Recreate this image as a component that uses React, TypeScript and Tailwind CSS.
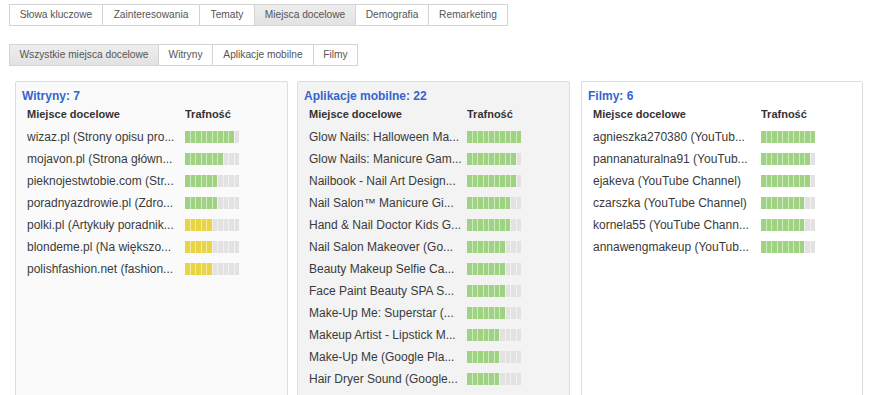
import React from 'react';

type Row = { name: string; score: number; color?: 'green' | 'yellow' };

type Panel = {
  title: string;
  bg: string;
  width: string;
  textCol: string;
  rows: Row[];
};

const topTabs = [
  { label: 'Słowa kluczowe', w: 'w-[94px]' },
  { label: 'Zainteresowania', w: 'w-[97px]' },
  { label: 'Tematy', w: 'w-[55px]' },
  { label: 'Miejsca docelowe', w: 'w-[101px]', active: true },
  { label: 'Demografia', w: 'w-[73px]' },
  { label: 'Remarketing', w: 'w-[79px]' },
];

const subTabs = [
  { label: 'Wszystkie miejsca docelowe', w: 'w-[150px]', active: true },
  { label: 'Witryny', w: 'w-[54px]' },
  { label: 'Aplikacje mobilne', w: 'w-[101px]' },
  { label: 'Filmy', w: 'w-[44px]' },
];

const panels: Panel[] = [
  {
    title: 'Witryny: 7',
    bg: 'bg-[#fafafa]',
    width: 'w-[273px]',
    textCol: 'w-[158px]',
    rows: [
      { name: 'wizaz.pl (Strony opisu pro...', score: 9 },
      { name: 'mojavon.pl (Strona główn...', score: 7 },
      { name: 'pieknojestwtobie.com (Str...', score: 6 },
      { name: 'poradnyazdrowie.pl (Zdro...', score: 6 },
      { name: 'polki.pl (Artykuły poradnik...', score: 5, color: 'yellow' },
      { name: 'blondeme.pl (Na większo...', score: 5, color: 'yellow' },
      { name: 'polishfashion.net (fashion...', score: 5, color: 'yellow' },
    ],
  },
  {
    title: 'Aplikacje mobilne: 22',
    bg: 'bg-[#f3f3f3]',
    width: 'w-[273px]',
    textCol: 'w-[158px]',
    rows: [
      { name: 'Glow Nails: Halloween Ma...', score: 10 },
      { name: 'Glow Nails: Manicure Gam...', score: 9 },
      { name: 'Nailbook - Nail Art Design...', score: 9 },
      { name: 'Nail Salon™ Manicure Gi...', score: 8 },
      { name: 'Hand & Nail Doctor Kids G...', score: 8 },
      { name: 'Nail Salon Makeover (Go...', score: 7 },
      { name: 'Beauty Makeup Selfie Ca...', score: 7 },
      { name: 'Face Paint Beauty SPA S...', score: 7 },
      { name: 'Make-Up Me: Superstar (...', score: 7 },
      { name: 'Makeup Artist - Lipstick M...', score: 6 },
      { name: 'Make-Up Me (Google Pla...', score: 6 },
      { name: 'Hair Dryer Sound (Google...', score: 6 },
    ],
  },
  {
    title: 'Filmy: 6',
    bg: 'bg-white',
    width: 'w-[282px]',
    textCol: 'w-[168px]',
    rows: [
      { name: 'agnieszka270380 (YouTub...', score: 10 },
      { name: 'pannanaturalna91 (YouTub...', score: 9 },
      { name: 'ejakeva (YouTube Channel)', score: 9 },
      { name: 'czarszka (YouTube Channel)', score: 8 },
      { name: 'kornela55 (YouTube Chann...', score: 8 },
      { name: 'annawengmakeup (YouTub...', score: 8 },
    ],
  },
];

function TabBar({ tabs }: { tabs: { label: string; w: string; active?: boolean }[] }) {
  return (
    <div className="flex">
      {tabs.map((t, i) => (
        <div
          key={t.label}
          className={`${t.w} h-[22px] flex items-center justify-center border border-[#d4d4d4] text-[10.2px] text-[#555] ${
            i > 0 ? 'border-l-0' : ''
          } ${t.active ? 'bg-gradient-to-b from-[#eeeeee] to-[#e2e2e2]' : 'bg-white'}`}
        >
          {t.label}
        </div>
      ))}
    </div>
  );
}

function Bar({ score, color = 'green' }: { score: number; color?: 'green' | 'yellow' }) {
  const fill = color === 'green' ? 'bg-[#9fd283]' : 'bg-[#e8d545]';
  return (
    <div className="flex w-[54px] h-3">
      {Array.from({ length: 10 }).map((_, i) => (
        <div
          key={i}
          className={`flex-1 ${i < score ? fill : 'bg-[#e2e2e2]'} ${i > 0 ? 'border-l border-white/50' : ''}`}
        />
      ))}
    </div>
  );
}

export default function App() {
  return (
    <div className="w-[877px] h-[395px] overflow-hidden bg-white font-['Liberation_Sans',Arial,sans-serif]">
      <div className="pl-[9px] pt-[4px]">
        <TabBar tabs={topTabs} />
        <div className="mt-[18px]">
          <TabBar tabs={subTabs} />
        </div>
      </div>
      <div className="flex items-start pl-[15px] mt-[15px] gap-[9px]">
        {panels.map((p, idx) => (
          <div
            key={p.title}
            className={`${p.width} ${p.bg} h-[330px] border border-[#dddddd] rounded-[2px] pt-[7px] ${idx === 2 ? 'ml-[2px]' : ''}`}
          >
            <div className="pl-[6px] text-[12px] leading-[14px] font-bold text-[#3366cc]">{p.title}</div>
            <div className="pl-[11px] mt-[4px]">
              <div className="flex text-[11px] leading-[14px] font-bold text-[#333]">
                <div className={p.textCol}>Miejsce docelowe</div>
                <div>Trafność</div>
              </div>
              <div className="mt-[5px]">
                {p.rows.map((r) => (
                  <div key={r.name} className="flex items-center h-[22px]">
                    <div className={`${p.textCol} text-[12px] text-[#3a3a3a] whitespace-nowrap overflow-hidden`}>
                      {r.name}
                    </div>
                    <Bar score={r.score} color={r.color} />
                  </div>
                ))}
              </div>
            </div>
          </div>
        ))}
      </div>
    </div>
  );
}
